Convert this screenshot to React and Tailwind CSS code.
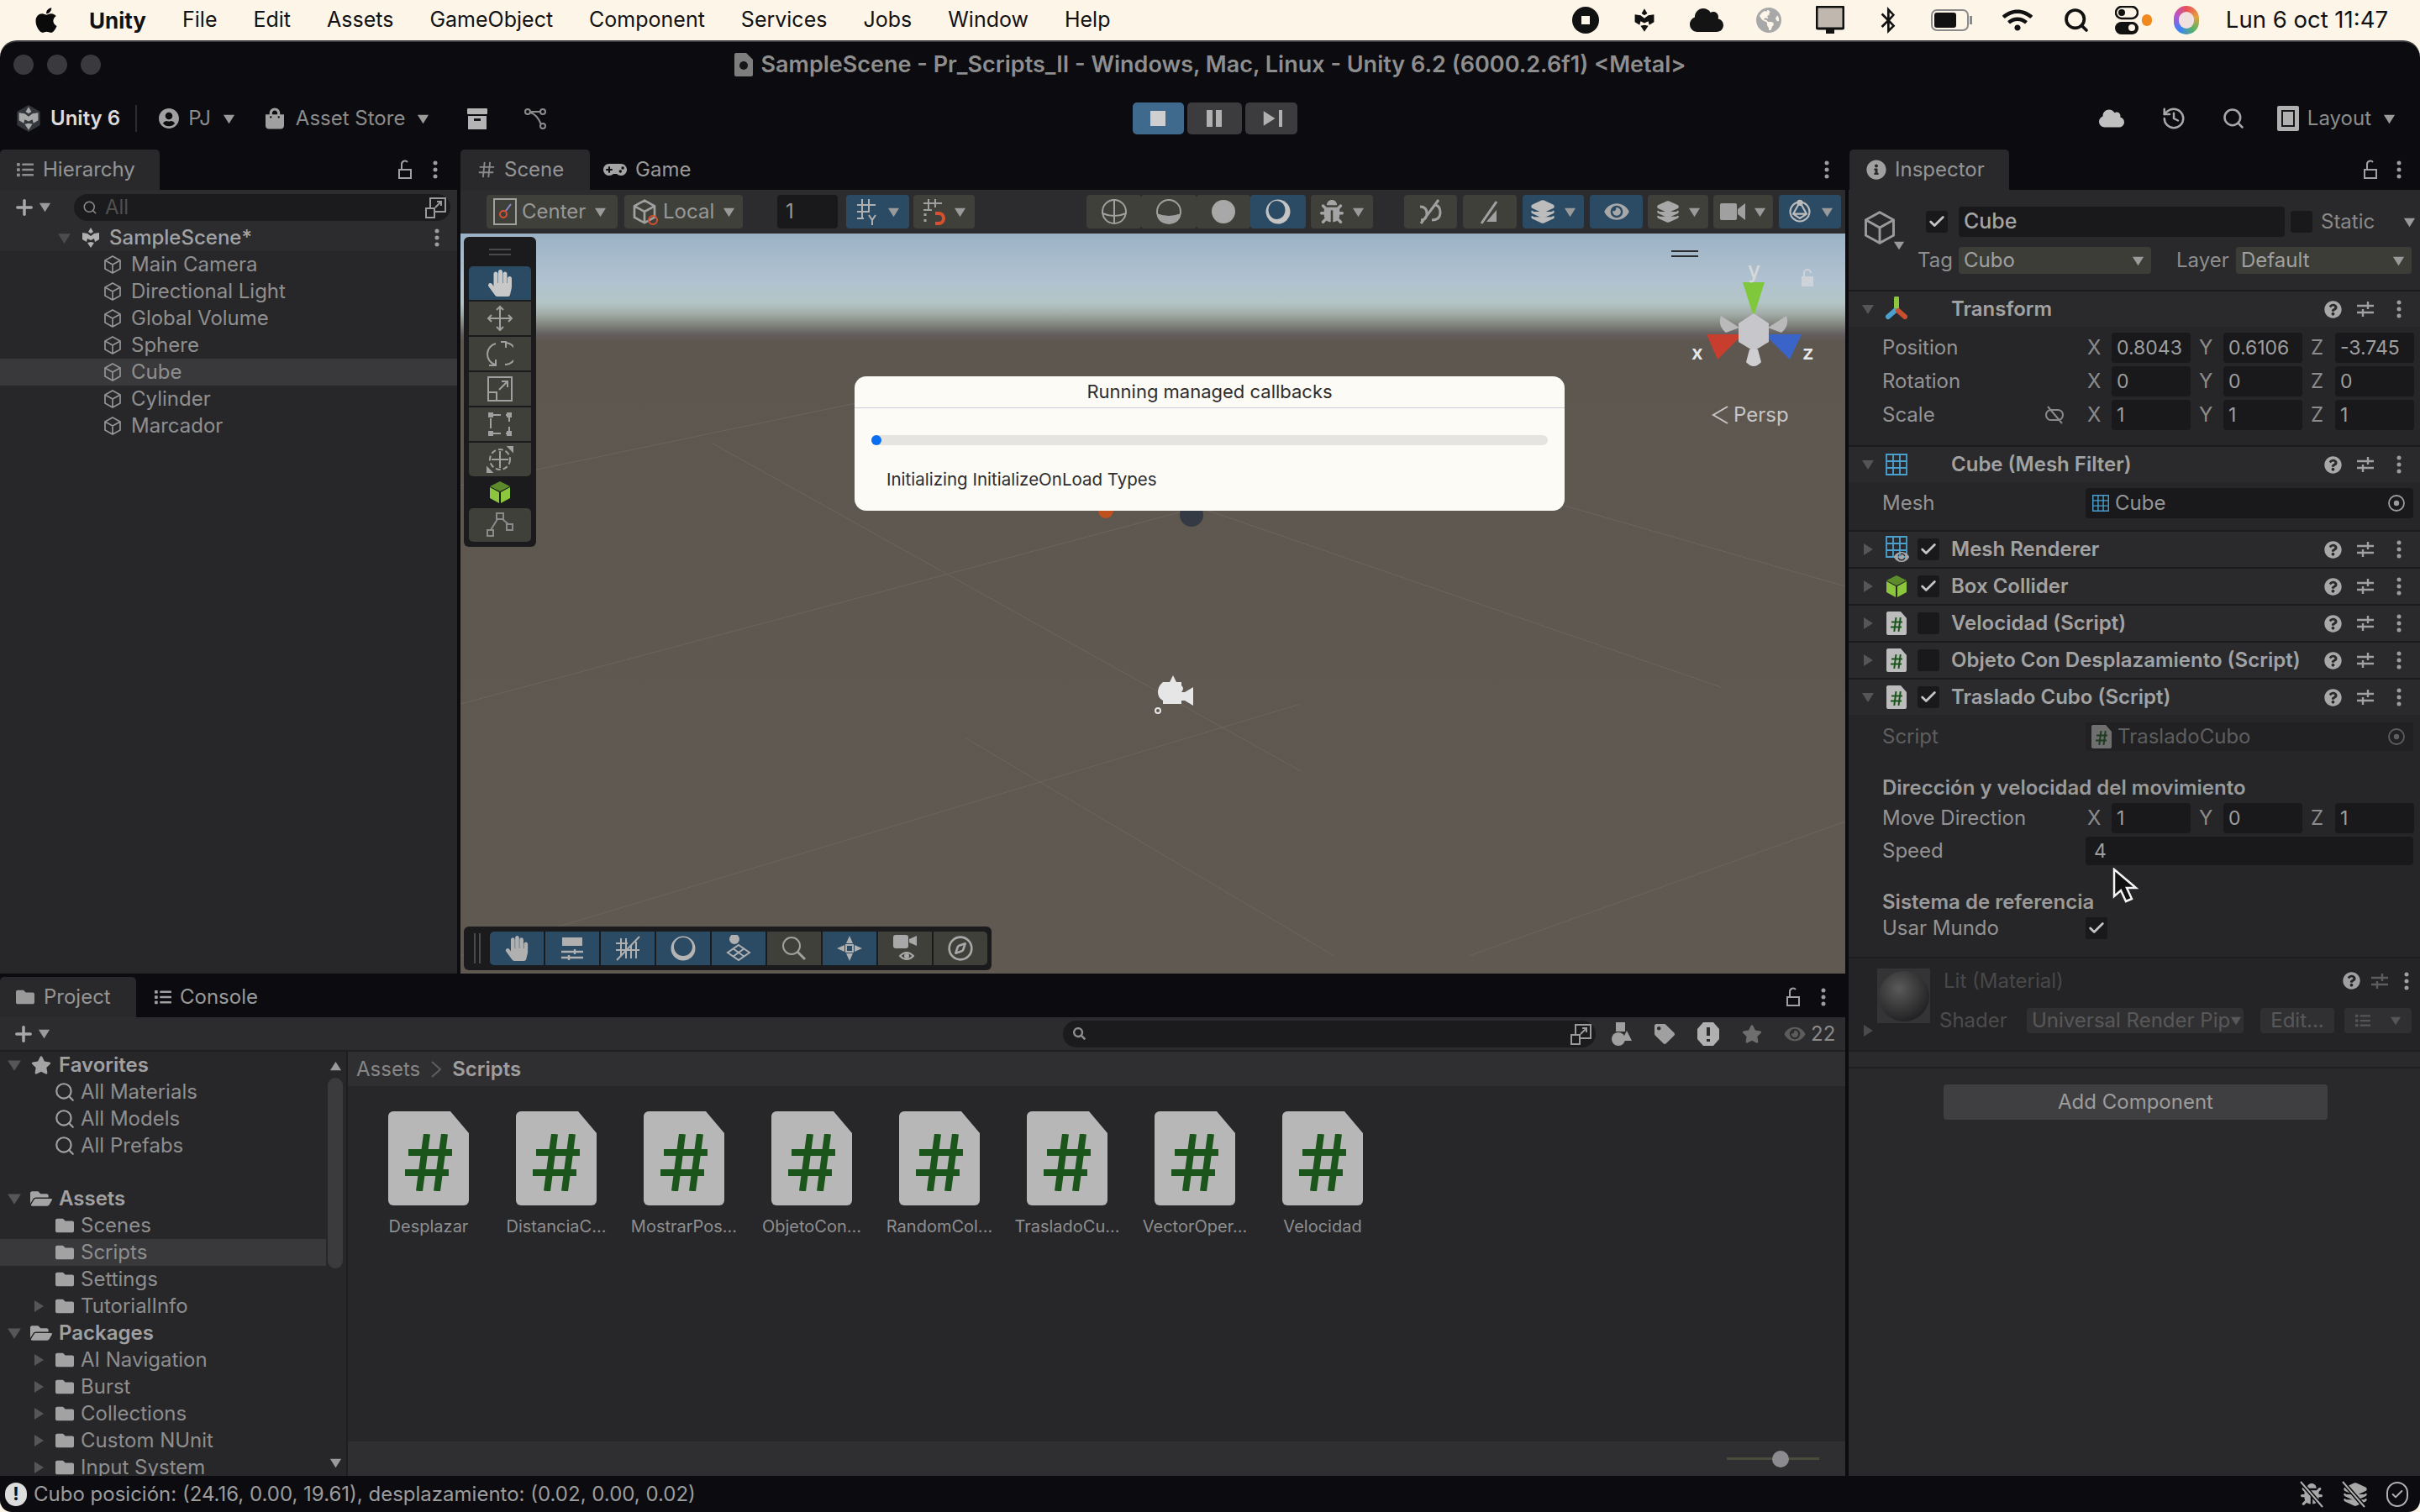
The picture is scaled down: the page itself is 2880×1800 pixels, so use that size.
import React from 'react';
import { FaApple, FaFolder, FaFolderOpen, FaStar, FaBug, FaCloud, FaQuestionCircle, FaHandPaper, FaEye, FaTag, FaSearch, FaGamepad, FaInfoCircle, FaList, FaShoppingBag, FaUserCircle, FaBluetoothB, FaWifi, FaGlobeAmericas } from 'react-icons/fa';
import { Check, Search, History, Plus, Compass, Layers } from 'lucide-react';

const Tri = ({ dir = 'down', c = '#9a9a9a', s = 16, className = '' }) => (
  <svg width={s} height={s} viewBox="0 0 16 16" className={'shrink-0 ' + className}>
    <path d={dir === 'down' ? 'M1 3h14L8 14z' : dir === 'up' ? 'M1 13h14L8 2z' : 'M3 1v14l11-7z'} fill={c} />
  </svg>
);
const Kebab = ({ c = '#9c9c9c' }) => (
  <svg width="6" height="24" viewBox="0 0 6 24" className="shrink-0"><circle cx="3" cy="4" r="2.5" fill={c} /><circle cx="3" cy="12" r="2.5" fill={c} /><circle cx="3" cy="20" r="2.5" fill={c} /></svg>
);
const OpenLock = () => (
  <svg width="18" height="24" viewBox="0 0 18 24" fill="none" stroke="#a0a0a0" strokeWidth="2" className="shrink-0"><rect x="2" y="12" width="14" height="10" /><path d="M5 12V5a4 4 0 0 1 7-2" /></svg>
);
const UnityMark = ({ s = 28, c = '#c9c9c9', bg = 'none' }) => (
  <svg width={s} height={s} viewBox="0 0 28 28" className="shrink-0">
    {bg !== 'none' && <path d="M14 0l12 7v14l-12 7-12-7V7z" fill={bg} />}
    <path d="M14 2l3 5-3 2-3-2zM4 8l6 1 4 3v5l-4-2-1 4-5-3zM24 8l-6 1-4 3v5l4-2 1 4 5-3zM14 19l4 1-4 6-4-6z" fill={c} />
  </svg>
);
const CubeOutline = ({ s = 24, c = '#9a9a9a', w = 2 }) => (
  <svg width={s} height={s} viewBox="0 0 24 24" fill="none" stroke={c} strokeWidth={w} className="shrink-0"><path d="M12 2l9 5v10l-9 5-9-5V7zM3 7l9 5 9-5M12 12v10" /></svg>
);
const GreenCube = ({ s = 28 }) => (
  <svg width={s} height={s} viewBox="0 0 28 28" className="shrink-0"><path d="M14 1l12 6-12 6L2 7z" fill="#5d8a2a" /><path d="M2 8l11 6v13L2 21z" fill="#8cc63f" /><path d="M26 8l-11 6v13l11-6z" fill="#8cc63f" /></svg>
);
const Hash = ({ c, w, s }) => (
  <svg width={s} height={s} viewBox="0 0 24 24" stroke={c} strokeWidth={w} className="shrink-0"><path d="M9.5 2L7.5 22M16.5 2l-2 20M3 8.5h19M2 15.5h19" /></svg>
);
const ScriptHash = ({ w, h }) => (
  <svg width={w} height={h} viewBox="0 0 56 68" stroke="#1b551b" className="shrink-0"><path d="M26 0L17 68M47 0L38 68" strokeWidth="8" /><path d="M4 22h52M0 46h52" strokeWidth="8" /></svg>
);
const ScriptSmall = ({ dim }) => (
  <div className={"relative w-[24px] h-[28px] flex items-center justify-center shrink-0 " + (dim ? 'opacity-50' : '')}>
    <svg width="24" height="28" viewBox="0 0 24 28" className="absolute inset-0"><path d="M2 0h15l7 8v18a2 2 0 0 1-2 2H2a2 2 0 0 1-2-2V2a2 2 0 0 1 2-2z" fill="#bcbcbc" /></svg>
    <div className="relative mt-[2px]"><ScriptHash w={14} h={17} /></div>
  </div>
);
const GridIcon = ({ s = 26, c = '#4ba0d0' }) => (
  <svg width={s} height={s} viewBox="0 0 26 26" fill="none" stroke={c} strokeWidth="1.8" className="shrink-0"><path d="M1 1h24v24H1zM1 9h24M1 17h24M9 1v24M17 1v24" /></svg>
);
const MeshRenderer = () => (
  <div className="relative w-[27px] h-[33px] shrink-0">
    <GridIcon s={26} />
    <FaEye className="absolute right-[-2px] bottom-0 text-[#a6a6a6] w-[20px] h-[16px]" />
  </div>
);
const TransformIcon = () => (
  <svg width="28" height="30" viewBox="0 0 28 30" className="shrink-0"><path d="M14 2v14" stroke="#8cc63f" strokeWidth="6" strokeLinecap="round" /><path d="M12 17l-8 7" stroke="#4ba0d0" strokeWidth="6" strokeLinecap="round" /><path d="M16 17l8 7" stroke="#c8502e" strokeWidth="6" strokeLinecap="round" /></svg>
);
const SlidersI = ({ c = '#a0a0a0' }) => (
  <svg width="22" height="24" viewBox="0 0 22 24" stroke={c} strokeWidth="2.4" fill="none" className="shrink-0"><path d="M1 8h20M1 16h20M14 3v9M8 12v9" /></svg>
);
const Target = ({ c = '#9c9c9c' }) => (
  <svg width="22" height="22" viewBox="0 0 22 22" className="shrink-0"><circle cx="11" cy="11" r="9" fill="none" stroke={c} strokeWidth="1.8" /><circle cx="11" cy="11" r="3.2" fill={c} /></svg>
);
const Box = ({ on }) => (
  <div className="w-[26px] h-[26px] rounded-[3px] bg-[#19191b] flex items-center justify-center shrink-0">
    {on && <Check size={22} strokeWidth={3} className="text-[#c4c4c4]" />}
  </div>
);
const SearchOut = () => (
  <svg width="26" height="26" viewBox="0 0 26 26" fill="none" stroke="#9a9a9a" strokeWidth="2" className="shrink-0"><rect x="1" y="14" width="10" height="11" /><path d="M6 14V2h18v16H11M12 13l7-7M14 6h5v5" /></svg>
);
const Struck = ({ children }) => (
  <div className="relative flex items-center justify-center">
    {children}
    <svg width="30" height="34" viewBox="0 0 30 34" className="absolute left-[-2px] top-[-2px]"><path d="M2 2l26 30" stroke="#0b0b10" strokeWidth="5" /><path d="M2 2l26 30" stroke="#b0b0b0" strokeWidth="2" /></svg>
  </div>
);

const Tab = ({ active, icon, label, className = '' }) => (
  <div className={"h-[48px] flex items-center gap-[10px] shrink-0 rounded-t-[5px] text-[24px] " + (active ? 'bg-[#29292b] text-[#959595] ' : 'text-[#9a9a9a] ') + className}>
    {icon}<span>{label}</span>
  </div>
);

const Btn = ({ className = '', blue, arrow, children, label }) => (
  <div className={"h-[40px] rounded-[4px] flex items-center justify-center gap-[6px] shrink-0 text-[24px] text-[#989898] " + (blue ? 'bg-[#2b4a63] ' : 'bg-[#40403a] ') + className}>
    {children}
    {label && <span>{label}</span>}
    {arrow && <Tri s={15} className="ml-[4px]" />}
  </div>
);

const CompHeader = ({ open, icon, check, title }) => (
  <div className="h-[44px] flex items-center pl-[15px] pr-[22px] border-t-2 border-[#1b1b1d] bg-[#2a2a2c]">
    <Tri dir={open ? 'down' : 'right'} c="#555557" s={16} />
    <div className="w-[28px] ml-[12px] flex justify-center shrink-0">{icon}</div>
    <div className="w-[26px] ml-[11px] shrink-0">{check !== undefined && <Box on={check} />}</div>
    <span className="ml-[14px] flex-1 text-[24px] font-semibold text-[#a2a2a2] whitespace-nowrap">{title}</span>
    <FaQuestionCircle className="w-[21px] h-[21px] text-[#a8a8a8] shrink-0" />
    <div className="ml-[17px]"><SlidersI /></div>
    <div className="ml-[26px]"><Kebab /></div>
  </div>
);

const V3 = ({ vals }) => (
  <div className="flex gap-[10px] pl-[2px]">
    {['X', 'Y', 'Z'].map((l, i) => (
      <div key={l} className="flex items-center w-[123px]">
        <span className="w-[29px] text-[24px] text-[#8c8c8c]">{l}</span>
        <div className="w-[94px] h-[36px] rounded-[4px] bg-[#19191b] pl-[6px] flex items-center text-[23px] text-[#9e9e9e] overflow-hidden whitespace-nowrap">{vals[i]}</div>
      </div>
    ))}
  </div>
);
const Row = ({ label, children, extra, className = 'h-[40px]' }) => (
  <div className={"flex items-center pl-[40px] " + className}>
    <div className="w-[242px] flex items-center justify-between pr-[24px] text-[24px] text-[#939393] shrink-0"><span>{label}</span>{extra}</div>
    {children}
  </div>
);

const Inspector = () => (
  <div className="w-[680px] ml-[4px] flex flex-col shrink-0">
    <div className="h-[48px] flex items-center">
      <Tab active className="w-[190px] pl-[20px] ml-[1px]" label="Inspector" icon={<FaInfoCircle className="w-[24px] h-[24px] text-[#a0a0a0]" />} />
      <div className="flex-1" />
      <OpenLock /><div className="ml-[22px] mr-[22px]"><Kebab /></div>
    </div>
    <div className="flex-1 bg-[#29292b] flex flex-col">
      <div className="h-[119px] pt-[20px] flex flex-col">
        <div className="h-[36px] flex items-center">
          <div className="ml-[15px] w-[77px] mt-[14px] relative">
            <CubeOutline s={44} w={1.6} />
            <Tri s={14} className="absolute left-[38px] top-[36px]" />
          </div>
          <Box on />
          <div className="ml-[13px] w-[388px] h-[36px] rounded-[4px] bg-[#19191b] pl-[6px] flex items-center text-[25px] font-medium text-[#a4a4a4]">Cube</div>
          <div className="ml-[7px]"><Box /></div>
          <span className="ml-[10px] text-[24px] text-[#8a8a8a]">Static</span>
          <Tri s={15} className="ml-[34px]" />
        </div>
        <div className="h-[32px] mt-[12px] flex items-center text-[24px]">
          <div className="w-[131px] pl-[82px] text-[#8e8e8e]">Tag</div>
          <div className="w-[229px] h-[32px] rounded-[4px] bg-[#3d3d37] px-[6px] flex items-center justify-between text-[#a0a0a0]">Cubo<Tri s={15} className="mr-[2px]" /></div>
          <div className="w-[101px] pl-[30px] text-[#8e8e8e]">Layer</div>
          <div className="w-[209px] h-[32px] rounded-[4px] bg-[#3d3d37] px-[6px] flex items-center justify-between text-[#a0a0a0]">Default<Tri s={15} className="mr-[2px]" /></div>
        </div>
      </div>
      <CompHeader open icon={<TransformIcon />} title="Transform" />
      <div className="pt-[5px] pb-[16px] bg-[#262628]">
        <Row label="Position"><V3 vals={['0.8043', '0.6106', '-3.745']} /></Row>
        <Row label="Rotation"><V3 vals={['0', '0', '0']} /></Row>
        <Row label="Scale" extra={<svg width="26" height="26" viewBox="0 0 26 26" fill="none" stroke="#8a8a8a" strokeWidth="2"><path d="M10 7a6 6 0 0 0-7 6 6 6 0 0 0 7 6h6a6 6 0 0 0 7-6 6 6 0 0 0-7-6zM5 3l17 20" /></svg>}><V3 vals={['1', '1', '1']} /></Row>
      </div>
      <CompHeader open icon={<GridIcon s={26} />} title="Cube (Mesh Filter)" />
      <div className="pt-[7px] pb-[14px] bg-[#262628]">
        <Row label="Mesh" className="h-[36px]">
          <div className="w-[390px] h-[36px] rounded-[4px] bg-[#19191b] flex items-center pl-[8px] pr-[9px] gap-[7px] text-[24px] text-[#959595]"><GridIcon s={20} /><span className="flex-1">Cube</span><Target /></div>
        </Row>
      </div>
      <CompHeader icon={<MeshRenderer />} check title="Mesh Renderer" />
      <CompHeader icon={<GreenCube s={28} />} check title="Box Collider" />
      <CompHeader icon={<ScriptSmall />} check={false} title="Velocidad (Script)" />
      <CompHeader icon={<ScriptSmall />} check={false} title="Objeto Con Desplazamiento (Script)" />
      <CompHeader open icon={<ScriptSmall />} check title="Traslado Cubo (Script)" />
      <div className="pt-[9px] pb-[21px] bg-[#262628]">
        <Row label={<span className="text-[#5e5e5e]">Script</span>} className="h-[34px]">
          <div className="w-[390px] h-[34px] rounded-[4px] bg-[#212123] flex items-center pl-[7px] pr-[9px] gap-[7px] text-[24px] text-[#5e5e5e]"><ScriptSmall dim /><span className="flex-1">TrasladoCubo</span><Target c="#5e5e5e" /></div>
        </Row>
        <div className="h-[36px] mt-[26px] pl-[40px] flex items-center text-[24px] font-semibold text-[#9a9a9a]">Dirección y velocidad del movimiento</div>
        <Row label="Move Direction" className="h-[36px]"><V3 vals={['1', '0', '1']} /></Row>
        <Row label="Speed" className="h-[34px] mt-[4px]">
          <div className="w-[390px] h-[34px] rounded-[4px] bg-[#19191b] flex items-center pl-[10px] text-[23px] text-[#9e9e9e]">4</div>
        </Row>
        <div className="h-[36px] mt-[26px] pl-[40px] flex items-center text-[24px] font-semibold text-[#9a9a9a]">Sistema de referencia</div>
        <Row label="Usar Mundo" className="h-[26px]"><Box on /></Row>
      </div>
      <div className="h-[111px] border-t-2 border-[#1f1f21] bg-[#242426] flex">
        <div className="w-[34px] pl-[15px] pt-[78px] shrink-0"><Tri dir="right" c="#4a4a4c" s={16} /></div>
        <div className="w-[63px] pt-[12px] shrink-0 flex flex-col">
          <div className="w-[63px] h-[65px] bg-[#343436] flex items-center justify-center"><div className="w-[60px] h-[60px] rounded-full bg-[radial-gradient(circle_at_40%_35%,#5a5a5a,#222224_75%)]" /></div>
        </div>
        <div className="flex-1 flex flex-col">
          <div className="h-[27px] mt-[13px] flex items-center pl-[16px] pr-[13px] text-[24px] text-[#484848]">
            <span className="flex-1">Lit (Material)</span>
            <FaQuestionCircle className="w-[21px] h-[21px] text-[#a0a0a0]" />
            <div className="ml-[12px]"><SlidersI c="#5c5c5c" /></div>
            <div className="ml-[18px]"><Kebab c="#a0a0a0" /></div>
          </div>
          <div className="h-[32px] mt-[18px] flex items-center pl-[11px] text-[24px] text-[#4c4c4c]">
            <span className="w-[104px]">Shader</span>
            <div className="w-[258px] h-[30px] bg-[#303032] rounded-[4px] flex items-center justify-between pl-[6px] pr-[2px] text-[#585858] whitespace-nowrap overflow-hidden">Universal Render Pip<Tri s={14} c="#585858" /></div>
            <div className="ml-[20px] w-[88px] h-[30px] bg-[#303032] rounded-[4px] flex items-center justify-center text-[#585858]">Edit...</div>
            <div className="ml-[12px] w-[80px] h-[30px] bg-[#303032] rounded-[4px] flex items-center justify-between px-[12px]"><FaList className="w-[20px] h-[18px] text-[#555]" /><Tri s={14} c="#555" /></div>
          </div>
        </div>
      </div>
      <div className="h-[22px] border-y-2 border-[#1f1f21] bg-[#2a2a2c]" />
      <div className="mt-[19px] ml-[113px] w-[457px] h-[42px] rounded-[4px] bg-[#3f3f42] flex items-center justify-center text-[24px] text-[#9c9c9c]">Add Component</div>
    </div>
  </div>
);

const hierItems = ['Main Camera', 'Directional Light', 'Global Volume', 'Sphere', 'Cube', 'Cylinder', 'Marcador'];
const Hierarchy = () => (
  <div className="w-[544px] flex flex-col shrink-0">
    <div className="h-[48px] flex items-center">
      <Tab active className="w-[190px] pl-[19px]" label="Hierarchy" icon={<FaList className="w-[22px] h-[20px] text-[#8e8e8e]" />} />
      <div className="flex-1" />
      <OpenLock /><div className="ml-[24px] mr-[23px]"><Kebab /></div>
    </div>
    <div className="flex-1 bg-[#27272a] flex flex-col">
      <div className="h-[41px] flex items-center bg-[#2c2c2e] pl-[15px] pr-[8px]">
        <Plus size={28} strokeWidth={3} className="text-[#a8a8a8]" />
        <Tri s={15} className="ml-[3px]" />
        <div className="ml-[27px] flex-1 h-[32px] rounded-[16px] bg-[#1b1b1d] flex items-center pl-[10px] pr-[4px] text-[24px] text-[#4f4f4f]">
          <Search size={18} className="text-[#8c8c8c]" /><span className="ml-[9px] flex-1">All</span><SearchOut />
        </div>
      </div>
      <div className="h-[32px] flex items-center bg-[#2c2c2e] pl-[68px] pr-[21px]">
        <Tri c="#4c4c4c" s={17} />
        <div className="ml-[9px]"><UnityMark s={28} c="#b0b0b0" /></div>
        <span className="ml-[8px] flex-1 text-[24px] font-medium text-[#a2a2a2]">SampleScene*</span>
        <Kebab />
      </div>
      {hierItems.map((n) => (
        <div key={n} className={"h-[32px] flex items-center pl-[122px] gap-[10px] text-[24px] text-[#8f8f8f] " + (n === 'Cube' ? 'bg-[#39393b]' : '')}>
          <CubeOutline s={24} c="#949494" w={1.7} /><span>{n}</span>
        </div>
      ))}
    </div>
  </div>
);

const Gizmo = () => (
  <svg width="180" height="170" viewBox="0 0 180 170" className="absolute left-[1474px] top-[30px]">
    <path d="M52 28h26L65 69z" fill="#7fc83c" />
    <path d="M9 90h43L22 120z" fill="#c83e2e" />
    <path d="M78 90h44l-14 30z" fill="#3a64c8" />
    <path d="M65 65l18 12v22L65 110 47 99V77z" fill="#c7c7cb" />
    <path d="M48 82L26 68q-4 12 6 20zM82 82l22-14q4 12-6 20z" fill="#b9b9ba" />
    <path d="M60 108h10l4 15q-9 10-18 0z" fill="#cfcfd2" />
  </svg>
);

const Scene = () => (
  <div className="flex-1 flex flex-col ml-[4px] min-w-0">
    <div className="h-[48px] flex items-center">
      <Tab active className="w-[154px] pl-[20px]" label="Scene" icon={<Hash c="#8a8a8a" w={2} s={22} />} />
      <Tab className="ml-[16px]" label="Game" icon={<FaGamepad className="w-[28px] h-[24px] text-[#a4a4a4]" />} />
      <div className="flex-1" />
      <div className="mr-[19px]"><Kebab /></div>
    </div>
    <div className="h-[52px] bg-[#2c2c2e] flex items-center pl-[31px]">
      <Btn className="w-[156px] !justify-start pl-[8px]" arrow label="Center"><svg width="28" height="32" viewBox="0 0 28 32" fill="none" className="shrink-0"><rect x="1" y="1" width="26" height="30" stroke="#a0a0a0" strokeWidth="2" /><circle cx="12" cy="19" r="4" stroke="#d9502e" strokeWidth="2" /><path d="M15 15l6-8" stroke="#8a8ad0" strokeWidth="2" /></svg></Btn>
      <Btn className="w-[141px] ml-[8px] !justify-start pl-[8px]" arrow label="Local"><div className="relative"><CubeOutline s={32} c="#a0a0a0" /><div className="absolute right-[0px] bottom-[0px] w-[12px] h-[12px] rounded-full border-2 border-[#d9502e]" /></div></Btn>
      <div className="ml-[41px] w-[72px] h-[40px] rounded-[4px] bg-[#19191b] pl-[10px] flex items-center text-[24px] text-[#969696]">1</div>
      <Btn blue className="w-[75px] ml-[10px]" arrow><svg width="28" height="32" viewBox="0 0 28 32" fill="none" stroke="#b0b0b0" strokeWidth="2"><path d="M8 1v24M16 1v16M2 8h22M2 16h14M2 24h8M16 20l4 6 4-6M20 26v6" /></svg></Btn>
      <Btn className="w-[73px] ml-[5px]" arrow><svg width="28" height="32" viewBox="0 0 28 32" fill="none" stroke="#a0a0a0" strokeWidth="2"><path d="M8 1v12M16 1v10M2 6h22M2 14h10" /><path d="M4 18v3M4 25v3" strokeWidth="3" /><path d="M16 18h4a5 5 0 0 1 0 12h-4" stroke="#d9502e" strokeWidth="4" /></svg></Btn>
      <Btn className="w-[65px] ml-[133px]"><svg width="30" height="30" viewBox="0 0 30 30" fill="none" stroke="#a0a0a0" strokeWidth="2"><circle cx="15" cy="15" r="14" /><path d="M15 1v28M1 17q14 6 28 0" /></svg></Btn>
      <Btn className="w-[66px]"><svg width="30" height="30" viewBox="0 0 30 30"><circle cx="15" cy="15" r="14" fill="none" stroke="#a0a0a0" strokeWidth="2" /><path d="M1 17q14 6 28 0q0 12-14 12T1 17" fill="#a0a0a0" /></svg></Btn>
      <Btn className="w-[64px]"><div className="w-[28px] h-[28px] rounded-full bg-[#a8a8a8]" /></Btn>
      <Btn blue className="w-[66px]"><svg width="30" height="30" viewBox="0 0 30 30"><circle cx="15" cy="15" r="14.5" fill="#c4c4c4" /><ellipse cx="13.5" cy="13" rx="10" ry="11" fill="#2b4a63" /></svg></Btn>
      <Btn className="w-[74px] ml-[6px]" arrow><FaBug className="w-[28px] h-[30px] text-[#a4a4a4]" /></Btn>
      <Btn className="w-[63px] ml-[37px]"><svg width="30" height="32" viewBox="0 0 30 32" fill="none" stroke="#a0a0a0" strokeWidth="3"><path d="M2 10q8 0 8 8t-7 8M3 30L24 2M16 26q10 0 10-9t-7-9" /></svg></Btn>
      <Btn className="w-[64px] ml-[7px]"><svg width="28" height="32" viewBox="0 0 28 32"><path d="M4 30L22 4" stroke="#a0a0a0" strokeWidth="3" /><path d="M22 14v14H10z" fill="#a0a0a0" /></svg></Btn>
      <Btn blue className="w-[73px] ml-[7px]" arrow><Layers size={30} className="text-[#bcbcbc]" fill="#bcbcbc" /></Btn>
      <Btn blue className="w-[63px] ml-[7px]"><FaEye className="w-[30px] h-[26px] text-[#a8a8a8]" /></Btn>
      <Btn className="w-[72px] ml-[6px]" arrow><Layers size={28} className="text-[#a8a8a8]" fill="#a8a8a8" /></Btn>
      <Btn className="w-[71px] ml-[6px]" arrow><svg width="30" height="24" viewBox="0 0 30 24" fill="#a0a0a0"><rect x="0" y="2" width="20" height="20" rx="2" /><path d="M21 9l9-7v20l-9-7z" /></svg></Btn>
      <Btn blue className="w-[74px] ml-[7px]" arrow><svg width="30" height="30" viewBox="0 0 30 34" fill="none" stroke="#bcbcbc" strokeWidth="2.4"><circle cx="15" cy="17" r="13" /><path d="M15 4l-9 16 9 6 9-6zM6 20h18" /><circle cx="15" cy="5" r="3" fill="#bcbcbc" /></svg></Btn>
    </div>
    <div className="flex-1 relative overflow-hidden bg-[linear-gradient(180deg,#9bb2c6_0px,#b0c2d0_55px,#b4c5c6_82px,#a3aeaa_95px,#82867f_108px,#645e60_120px,#5e5750_128px,#5f5952_100%)]">
      <svg width="1648" height="881" className="absolute inset-0" fill="none" stroke="#6b655d" strokeWidth="1">
        <path d="M0 300L480 200M0 560L900 320M0 860L1000 560M300 250L1000 640M600 230L1500 540M1040 860L600 600M1200 860L1648 700M1300 320L1648 420" />
        <circle cx="870" cy="335" r="14" fill="#343a44" stroke="none" />
        <circle cx="768" cy="330" r="9" fill="#c0501e" stroke="none" />
      </svg>
      <svg width="60" height="56" viewBox="0 0 60 56" className="absolute left-[820px] top-[520px]"><path d="M16 14h8l4-8 4 8h6v4q4 3 0 8h4l10-6v22l-10-6h-4v4H16v-4q-6-3-6-10t6-12z" fill="#e6e6e6" /><circle cx="10" cy="48" r="3" fill="none" stroke="#e6e6e6" strokeWidth="2" /></svg>
      <div className="absolute left-[1441px] top-[20px] w-[32px] h-[8px] border-y-2 border-[#2c2c2e]" />
      <Gizmo />
      <span className="absolute left-[1532px] top-[24px] text-[26px] font-medium text-[#d8d8d8]">y</span>
      <span className="absolute left-[1465px] top-[124px] text-[24px] font-semibold text-[#e8e8e8]">x</span>
      <span className="absolute left-[1597px] top-[124px] text-[24px] font-semibold text-[#e8e8e8]">z</span>
      <svg width="16" height="22" viewBox="0 0 16 22" className="absolute left-[1596px] top-[42px]"><rect y="9" width="14" height="12" fill="#cdd3d9" /><path d="M3 9V5a4 4 0 0 1 8 0" fill="none" stroke="#cdd3d9" strokeWidth="2" /></svg>
      <div className="absolute left-[1489px] top-[198px] flex items-center gap-[6px] text-[24px] text-[#c6c6c6]">
        <svg width="20" height="22" viewBox="0 0 20 22" fill="none" stroke="#c6c6c6" strokeWidth="2"><path d="M19 1L2 11l17 10" /></svg>Persp
      </div>

      <div className="absolute left-[4px] top-[4px] w-[86px] h-[369px] rounded-[6px] bg-[#1b1b1e] flex flex-col items-center">
        <div className="h-[35px] w-full flex flex-col items-center justify-center gap-[4px] shrink-0"><div className="w-[26px] h-[2px] bg-[#4a4a4a]" /><div className="w-[26px] h-[2px] bg-[#4a4a4a]" /></div>
        <div className="w-[74px] flex flex-col gap-[2px]">
          <div className="h-[40px] rounded-t-[5px] bg-[#2b4a63] flex items-center justify-center"><FaHandPaper className="w-[28px] h-[32px] text-[#c8c8c8]" /></div>
          <div className="h-[40px] bg-[#40403a] flex items-center justify-center"><svg width="32" height="32" viewBox="0 0 32 32" fill="none" stroke="#a0a0a0" strokeWidth="2"><path d="M16 2v28M2 16h28M12 6l4-4 4 4M12 26l4 4 4-4M6 12l-4 4 4 4M26 12l4 4-4 4" /></svg></div>
          <div className="h-[40px] bg-[#40403a] flex items-center justify-center"><svg width="32" height="32" viewBox="0 0 32 32" fill="none" stroke="#a0a0a0" strokeWidth="2"><path d="M10 29A13 13 0 0 1 11 4M22 3a13 13 0 0 1 0 26M17 2l6 0 0 7M3 30h8v-7" /></svg></div>
          <div className="h-[40px] bg-[#40403a] flex items-center justify-center"><svg width="30" height="30" viewBox="0 0 30 30" fill="none" stroke="#a0a0a0" strokeWidth="2"><path d="M1 1h28v28H1zM1 19h10v10M14 16L24 6M17 6h7v7" /></svg></div>
          <div className="h-[40px] bg-[#40403a] flex items-center justify-center"><svg width="28" height="28" viewBox="0 0 28 28" stroke="#a0a0a0" strokeWidth="2" fill="#a0a0a0"><path d="M3 3h22v22H3z" fill="none" strokeDasharray="12 6" /><rect x="0" y="0" width="5" height="5" /><rect x="23" y="0" width="5" height="5" /><rect x="0" y="23" width="5" height="5" /><rect x="23" y="23" width="5" height="5" /></svg></div>
          <div className="h-[40px] rounded-b-[5px] bg-[#40403a] flex items-center justify-center"><svg width="32" height="32" viewBox="0 0 32 32" fill="none" stroke="#a0a0a0" strokeWidth="2"><circle cx="16" cy="16" r="12" strokeDasharray="6 3" /><path d="M16 6v20M6 16h20" /><path d="M26 1h5v5zM1 31v-5l5 5z" fill="#a0a0a0" /></svg></div>
          <div className="h-[34px] flex items-center justify-center"><GreenCube s={28} /></div>
          <div className="h-[40px] rounded-[5px] bg-[#40403a] flex items-center justify-center"><svg width="32" height="30" viewBox="0 0 32 30" fill="none" stroke="#8a8a8a" strokeWidth="2"><rect x="12" y="1" width="8" height="7" /><rect x="24" y="14" width="7" height="7" /><rect x="1" y="21" width="7" height="7" /><path d="M13 8L5 21M19 8l7 6" /></svg></div>
        </div>
      </div>

      <div className="absolute left-[4px] top-[825px] w-[628px] h-[52px] rounded-[6px] bg-[#1b1b1e] flex items-center">
        <div className="w-[31px] h-[36px] flex justify-center gap-[4px] shrink-0"><div className="w-[2px] h-full bg-[#4a4a4a]" /><div className="w-[2px] h-full bg-[#4a4a4a]" /></div>
        <div className="flex gap-[2px]">
          <div className="w-[64px] h-[40px] rounded-l-[5px] bg-[#2b4a63] flex items-center justify-center"><FaHandPaper className="w-[28px] h-[30px] text-[#b0b0b0]" /></div>
          <div className="w-[64px] h-[40px] bg-[#2b4a63] flex items-center justify-center"><svg width="26" height="28" viewBox="0 0 26 28" fill="none" stroke="#b0b0b0" strokeWidth="2.4"><rect x="1" y="1" width="24" height="10" fill="#b0b0b0" stroke="none" /><path d="M0 18h26M0 25h26M16 15v6M9 22v6" /></svg></div>
          <div className="w-[64px] h-[40px] bg-[#2b4a63] flex items-center justify-center"><svg width="32" height="32" viewBox="0 0 32 32" fill="none" stroke="#b0b0b0" strokeWidth="2"><path d="M8 4v20M14 4v24M20 12v16M26 8v20M2 10h14M2 18h28M3 30L30 2" /></svg></div>
          <div className="w-[64px] h-[40px] bg-[#2b4a63] flex items-center justify-center"><svg width="30" height="30" viewBox="0 0 30 30"><circle cx="15" cy="15" r="14.5" fill="#b4b4b4" /><ellipse cx="15" cy="13" rx="11" ry="11" fill="#2b4a63" /></svg></div>
          <div className="w-[64px] h-[40px] bg-[#2b4a63] flex items-center justify-center"><svg width="30" height="32" viewBox="0 0 30 32" fill="none" stroke="#b0b0b0" strokeWidth="2"><ellipse cx="10" cy="5" rx="5" ry="5" fill="#b0b0b0" /><path d="M15 12l13 9-13 9-13-9zM8 16l14 10M22 16L8 26" /></svg></div>
          <div className="w-[64px] h-[40px] bg-[#40403a] flex items-center justify-center"><svg width="30" height="30" viewBox="0 0 30 30" fill="none" stroke="#a0a0a0" strokeWidth="2"><circle cx="12" cy="12" r="10" /><path d="M19 19l9 9" strokeWidth="3" /></svg></div>
          <div className="w-[64px] h-[40px] bg-[#2b4a63] flex items-center justify-center"><svg width="32" height="32" viewBox="0 0 32 32" fill="#b0b0b0"><path d="M12 10L16 1l4 9zM12 22l4 9 4-9zM10 12l-9 4 9 4zM22 12l9 4-9 4z" /><rect x="12" y="12" width="8" height="8" fill="none" stroke="#b0b0b0" strokeWidth="2" /></svg></div>
          <div className="w-[64px] h-[40px] bg-[#40403a] flex items-center justify-center"><svg width="32" height="34" viewBox="0 0 32 34" fill="#a8a8a8"><rect x="2" y="1" width="18" height="16" rx="3" /><path d="M21 6l9-4v12l-9-4z" /><path d="M10 26q8-8 16 0-8 8-16 0z" fill="none" stroke="#a8a8a8" strokeWidth="2" /><circle cx="18" cy="26" r="3" /></svg></div>
          <div className="w-[64px] h-[40px] rounded-r-[5px] bg-[#40403a] flex items-center justify-center"><Compass size={32} className="text-[#a8a8a8]" /></div>
        </div>
      </div>

      <div className="absolute left-[469px] top-[170px] w-[845px] h-[160px] rounded-[14px] bg-[#fdfbf6] flex flex-col text-[#2d2d2d]">
        <div className="h-[38px] border-b border-[#cfcbd8] flex items-center justify-center text-[22px]">Running managed callbacks</div>
        <div className="mt-[32px] mx-[20px] h-[12px] rounded-full bg-[#e6e4e0]"><div className="w-[12px] h-[12px] rounded-full bg-[#0a6ef0]" /></div>
        <div className="mt-[26px] ml-[38px] text-[20.5px]">Initializing InitializeOnLoad Types</div>
      </div>
    </div>
  </div>
);

const tree = [
  { d: 0, n: 'Favorites', k: 'star' }, { d: 1, n: 'All Materials', k: 'search' }, { d: 1, n: 'All Models', k: 'search' }, { d: 1, n: 'All Prefabs', k: 'search' }, { gap: true },
  { d: 0, n: 'Assets', k: 'open' }, { d: 1, n: 'Scenes' }, { d: 1, n: 'Scripts', sel: true }, { d: 1, n: 'Settings' }, { d: 1, n: 'TutorialInfo', a: true },
  { d: 0, n: 'Packages', k: 'open' }, { d: 1, n: 'AI Navigation', a: true }, { d: 1, n: 'Burst', a: true }, { d: 1, n: 'Collections', a: true }, { d: 1, n: 'Custom NUnit', a: true }, { d: 1, n: 'Input System', a: true },
];
const TreeRow = ({ r }) => {
  if (r.gap) return <div className="h-[31px] shrink-0" />;
  if (r.d === 0) return (
    <div className="h-[32px] flex items-center pl-[8px] shrink-0">
      <Tri c="#565658" s={18} />
      <div className="ml-[10px] w-[26px] flex justify-center">{r.k === 'star' ? <FaStar className="w-[24px] h-[24px] text-[#a4a4a4]" /> : <FaFolderOpen className="w-[26px] h-[24px] text-[#a4a4a4]" />}</div>
      <span className="ml-[8px] text-[24px] font-semibold text-[#a0a0a0]">{r.n}</span>
    </div>
  );
  return (
    <div className={"h-[32px] flex items-center pl-[38px] shrink-0 " + (r.sel ? 'bg-[#39393b] w-[388px]' : '')}>
      <div className="w-[16px]">{r.a && <Tri dir="right" c="#565658" s={16} />}</div>
      <div className="ml-[10px] w-[26px] flex justify-center">{r.k === 'search' ? <Search size={26} strokeWidth={2} className="text-[#a0a0a0]" /> : <FaFolder className="w-[24px] h-[22px] text-[#a2a2a2]" />}</div>
      <span className="ml-[6px] text-[24px] text-[#8e8e8e] whitespace-nowrap">{r.n}</span>
    </div>
  );
};

const assets = ['Desplazar', 'DistanciaC...', 'MostrarPos...', 'ObjetoCon...', 'RandomCol...', 'TrasladoCu...', 'VectorOper...', 'Velocidad'];
const ScriptBig = () => (
  <div className="relative w-[96px] h-[112px] flex items-center justify-center">
    <svg width="96" height="112" viewBox="0 0 96 112" className="absolute inset-0"><path d="M6 0h68l22 26v80a6 6 0 0 1-6 6H6a6 6 0 0 1-6-6V6a6 6 0 0 1 6-6z" fill="#b7b7b7" /></svg>
    <div className="relative mt-[10px]"><ScriptHash w={56} h={68} /></div>
  </div>
);

const Project = () => (
  <div className="h-[595px] mt-[3px] flex flex-col shrink-0">
    <div className="h-[49px] flex items-center">
      <Tab active className="w-[162px] pl-[18px]" label="Project" icon={<FaFolder className="w-[24px] h-[22px] text-[#9a9a9a]" />} />
      <Tab className="ml-[22px]" label="Console" icon={<FaList className="w-[20px] h-[22px] text-[#a0a0a0]" />} />
      <div className="flex-1" />
      <OpenLock /><div className="ml-[24px] mr-[23px]"><Kebab /></div>
    </div>
    <div className="h-[41px] bg-[#2c2c2e] flex items-center pl-[14px] border-b-2 border-[#1f1f21]">
      <Plus size={28} strokeWidth={3} className="text-[#a8a8a8]" />
      <Tri s={15} className="ml-[3px]" />
      <div className="ml-[1205px] w-[634px] h-[32px] rounded-[16px] bg-[#1b1b1d] flex items-center pl-[12px] pr-[4px]">
        <FaSearch className="w-[15px] h-[15px] text-[#8c8c8c]" /><div className="flex-1" /><SearchOut />
      </div>
      <div className="ml-[18px] flex items-center gap-[26px]">
        <svg width="26" height="30" viewBox="0 0 26 30" fill="#a0a0a0"><rect x="6" y="1" width="11" height="11" /><circle cx="9" cy="21" r="8" /><path d="M19 11l6 12H13z" /></svg>
        <FaTag className="w-[24px] h-[24px] text-[#a0a0a0]" />
        <svg width="28" height="30" viewBox="0 0 28 30"><path d="M8 1h12l7 8v12l-7 8H8l-7-8V9z" fill="#b0b0b0" /><path d="M14 7v10M14 21v3" stroke="#2c2c2e" strokeWidth="4" /></svg>
        <FaStar className="w-[24px] h-[24px] text-[#6e6e6e]" />
        <div className="flex items-center gap-[6px] text-[24px] text-[#8a8a8a]"><FaEye className="w-[26px] h-[22px] text-[#5c5c5c]" />22</div>
      </div>
    </div>
    <div className="flex-1 flex bg-[#27272a] min-h-0">
      <div className="w-[414px] shrink-0 relative border-r-2 border-[#1e1e20] flex flex-col overflow-hidden">
        {tree.map((r, i) => <TreeRow key={i} r={r} />)}
        <div className="absolute right-[2px] top-0 bottom-0 w-[22px] flex flex-col items-center pt-[10px] pb-[8px]">
          <Tri dir="up" s={15} />
          <div className="w-[18px] h-[227px] mt-[6px] rounded-full bg-[#3b3b3d]" />
          <div className="flex-1" />
          <Tri s={15} />
        </div>
      </div>
      <div className="flex-1 flex flex-col">
        <div className="h-[41px] bg-[#2f2f31] flex items-center pl-[10px] text-[24px] text-[#868686]">
          Assets
          <svg width="14" height="22" viewBox="0 0 14 22" fill="none" stroke="#5e5e5e" strokeWidth="2" className="mx-[12px]"><path d="M2 2l10 9-10 9" /></svg>
          <span className="font-semibold text-[#9e9e9e]">Scripts</span>
        </div>
        <div className="flex-1 pl-[20px] pt-[30px] flex items-start">
          {assets.map((a) => (
            <div key={a} className="w-[152px] flex flex-col items-center">
              <ScriptBig />
              <span className="mt-[13px] text-[20px] leading-[24px] text-[#8e8e8e] whitespace-nowrap">{a}</span>
            </div>
          ))}
        </div>
        <div className="h-[41px] bg-[#2f2f31] flex items-center justify-end pr-[31px]">
          <div className="w-[110px] h-[3px] bg-[#4b4b3c] flex justify-center items-center">
            <div className="w-[20px] h-[20px] ml-[18px] rounded-full bg-[#8c8c90] shrink-0" />
          </div>
        </div>
      </div>
    </div>
  </div>
);

const MenuBar = () => (
  <div className="h-[48px] bg-[#fdf5e8] flex items-center shrink-0 text-[#111] text-[25px]">
    <FaApple className="ml-[40px] w-[30px] h-[34px] text-[#0a0a0a]" />
    <div className="ml-[36px] flex items-center gap-[43px] whitespace-nowrap">
      <span className="font-bold text-[26px]">Unity</span>
      {['File', 'Edit', 'Assets', 'GameObject', 'Component', 'Services', 'Jobs', 'Window', 'Help'].map((m) => <span key={m}>{m}</span>)}
    </div>
    <div className="flex-1" />
    <div className="w-[32px] h-[32px] rounded-full bg-[#111] flex items-center justify-center"><div className="w-[10px] h-[10px] bg-[#fdf5e8]" /></div>
    <div className="ml-[38px]"><UnityMark s={32} c="#111" /></div>
    <FaCloud className="ml-[38px] w-[40px] h-[32px] text-[#141414]" />
    <FaGlobeAmericas className="ml-[39px] w-[30px] h-[32px] text-[#a8a8a8]" />
    <svg width="34" height="34" viewBox="0 0 34 34" className="ml-[41px]"><rect x="1" y="1" width="32" height="26" rx="2" fill="#c0b8ae" stroke="#111" strokeWidth="3" /><rect x="12" y="27" width="10" height="6" fill="#111" /></svg>
    <FaBluetoothB className="ml-[42px] w-[20px] h-[34px] text-[#111]" />
    <svg width="50" height="26" viewBox="0 0 50 26" className="ml-[41px]"><rect x="1" y="1" width="43" height="24" rx="6" fill="none" stroke="#8a8a8a" strokeWidth="2" /><rect x="4" y="4" width="26" height="18" rx="3" fill="#111" /><rect x="46" y="8" width="3" height="10" fill="#8a8a8a" /></svg>
    <FaWifi className="ml-[35px] w-[36px] h-[30px] text-[#111]" />
    <Search size={32} strokeWidth={2.8} className="ml-[36px] text-[#111]" />
    <svg width="28" height="34" viewBox="0 0 28 34" className="ml-[30px]"><rect x="1" y="1" width="26" height="14" rx="7" fill="none" stroke="#111" strokeWidth="2.5" /><circle cx="8" cy="8" r="4" fill="#111" /><rect x="0" y="19" width="28" height="15" rx="7.5" fill="#111" /><circle cx="20" cy="26" r="4" fill="#fdf5e8" /></svg>
    <div className="ml-[4px] w-[12px] h-[14px] rounded-full bg-[#f08a1e]" />
    <div className="ml-[26px] w-[30px] h-[34px] rounded-full bg-[conic-gradient(#e8505b,#e6a23c,#58b368,#3b82f6,#b455d6,#e8505b)] flex items-center justify-center"><div className="w-[18px] h-[20px] rounded-full bg-[#f0e0e0]" /></div>
    <span className="ml-[32px] mr-[38px] whitespace-nowrap text-[27.5px]">Lun 6 oct 11:47</span>
  </div>
);

const TitleBar = () => (
  <div className="h-[54px] relative flex items-center justify-center shrink-0 text-[27px] font-semibold text-[#8e8e8e]">
    <div className="absolute left-[16px] flex gap-[16px]">
      <div className="w-[24px] h-[24px] rounded-full bg-[#3a3a3e]" /><div className="w-[24px] h-[24px] rounded-full bg-[#3a3a3e]" /><div className="w-[24px] h-[24px] rounded-full bg-[#3a3a3e]" />
    </div>
    <svg width="22" height="28" viewBox="0 0 22 28" className="mr-[10px]"><path d="M2 0h12l8 8v18a2 2 0 0 1-2 2H2a2 2 0 0 1-2-2V2a2 2 0 0 1 2-2z" fill="#7e7e7e" /><circle cx="11" cy="15" r="5" fill="#16161a" /></svg>
    SampleScene - Pr_Scripts_II - Windows, Mac, Linux - Unity 6.2 (6000.2.6f1) &lt;Metal&gt;
  </div>
);

const Toolbar = () => (
  <div className="h-[74px] flex items-center shrink-0 text-[24px] text-[#8c8c8c]">
    <div className="flex-1 flex items-center pl-[18px]">
      <UnityMark s={32} c="#a8a8a8" bg="#33373c" />
      <span className="ml-[10px] font-semibold text-[#dcdcdc]">Unity 6</span>
      <div className="ml-[18px] w-[2px] h-[32px] bg-[#2c2c2e]" />
      <FaUserCircle className="ml-[26px] w-[24px] h-[26px] text-[#a0a0a0]" />
      <span className="ml-[11px]">PJ</span>
      <Tri s={15} className="ml-[14px]" />
      <FaShoppingBag className="ml-[36px] w-[22px] h-[26px] text-[#a0a0a0]" />
      <span className="ml-[14px]">Asset Store</span>
      <Tri s={15} className="ml-[14px]" />
      <svg width="24" height="26" viewBox="0 0 24 26" className="ml-[45px]" fill="#b4b4b4"><rect y="1" width="24" height="7" rx="1" /><path d="M1 10h22v16H1z" /><rect x="8" y="13" width="8" height="3" fill="#16161a" /></svg>
      <svg width="26" height="28" viewBox="0 0 26 28" className="ml-[44px]" fill="none" stroke="#8c8c8c" strokeWidth="2"><circle cx="4" cy="6" r="3" /><circle cx="22" cy="6" r="3" /><circle cx="22" cy="23" r="3" /><path d="M7 7q8 2 13 14M8 6h11" /></svg>
    </div>
    <div className="flex gap-[4px] ml-[22px]">
      <div className="w-[61px] h-[38px] rounded-[5px] bg-[#3f6a8e] flex items-center justify-center"><div className="w-[18px] h-[18px] bg-[#cfcfcf]" /></div>
      <div className="w-[65px] h-[38px] rounded-[5px] bg-[#3c3c3e] flex items-center justify-center gap-[4px]"><div className="w-[7px] h-[20px] bg-[#b0b0b0]" /><div className="w-[7px] h-[20px] bg-[#b0b0b0]" /></div>
      <div className="w-[62px] h-[38px] rounded-[5px] bg-[#3c3c3e] flex items-center justify-center gap-[2px]"><Tri dir="right" s={20} c="#b0b0b0" /><div className="w-[4px] h-[20px] bg-[#b0b0b0]" /></div>
    </div>
    <div className="flex-1 flex items-center justify-end pr-[29px]">
      <FaCloud className="w-[30px] h-[28px] text-[#c0c0c0]" />
      <History size={30} className="ml-[44px] text-[#a8a8a8]" />
      <Search size={28} strokeWidth={2.2} className="ml-[42px] text-[#a8a8a8]" />
      <div className="ml-[38px] w-[26px] h-[30px] bg-[#b0b0b0] rounded-[2px] flex items-center justify-center"><div className="w-[16px] h-[20px] border-2 border-[#16161a]" /></div>
      <span className="ml-[10px]">Layout</span>
      <Tri s={15} className="ml-[14px]" />
    </div>
  </div>
);

const StatusBar = () => (
  <div className="h-[43px] flex items-center shrink-0 text-[24px] text-[#9c9c9c] pl-[6px]">
    <div className="w-[26px] h-[28px] rounded-full bg-[#dcdcdc] flex items-center justify-center text-[#111] font-bold text-[22px]">!</div>
    <span className="ml-[8px] flex-1 whitespace-nowrap">Cubo posición: (24.16, 0.00, 19.61), desplazamiento: (0.02, 0.00, 0.02)</span>
    <Struck><FaBug className="w-[26px] h-[30px] text-[#a8a8a8]" /></Struck>
    <div className="ml-[24px]"><Struck><Layers size={30} className="text-[#a8a8a8]" fill="#a8a8a8" /></Struck></div>
    <div className="ml-[22px] mr-[14px] w-[26px] h-[30px] rounded-full border-2 border-[#b0b0b0] flex items-center justify-center"><Check size={16} strokeWidth={3} className="text-[#b0b0b0]" /></div>
  </div>
);

export default function App() {
  return (
    <div className="relative w-[2880px] h-[1800px] bg-[#fdf5e8] flex flex-col overflow-hidden font-['Inter','Liberation_Sans',sans-serif]">
      <MenuBar />
      <div className="flex-1 min-h-0 flex flex-col rounded-t-[20px] rounded-b-[14px] bg-[#0b0b10] border-t-2 border-[#3a3a3c]">
        <TitleBar />
        <Toolbar />
        <div className="flex-1 min-h-0 flex">
          <div className="w-[2196px] flex flex-col shrink-0">
            <div className="h-[981px] flex shrink-0">
              <Hierarchy />
              <Scene />
            </div>
            <Project />
          </div>
          <Inspector />
        </div>
        <StatusBar />
      </div>
      <svg width="36" height="44" viewBox="0 0 36 44" className="absolute left-[2514px] top-[1033px]"><path d="M2 2v32l8-7 6 13 7-3-6-13h11z" fill="#111" stroke="#f4f4f4" strokeWidth="2.5" /></svg>
    </div>
  );
}
